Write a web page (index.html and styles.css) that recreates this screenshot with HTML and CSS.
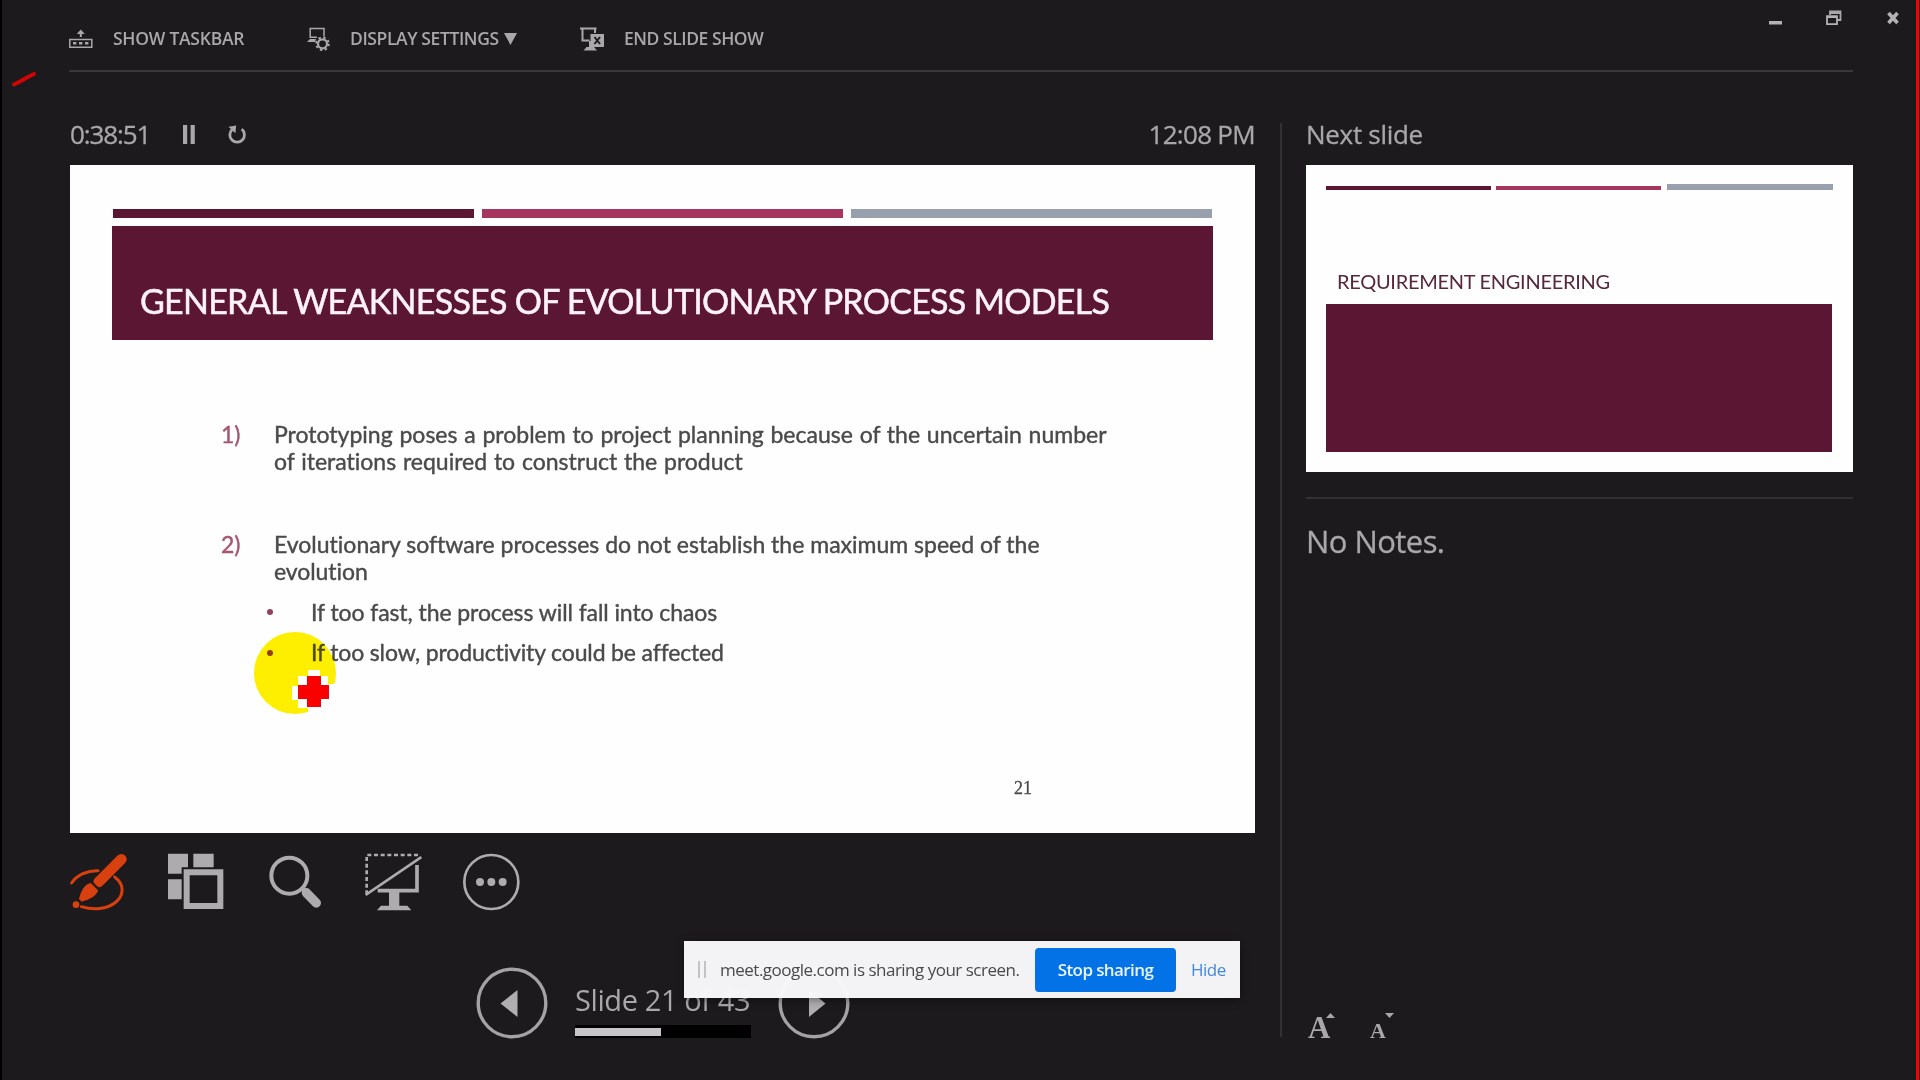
FILE: index.html
```html
<!DOCTYPE html>
<html lang="en">
<head>
<meta charset="utf-8">
<title>Presenter View</title>
<link rel="stylesheet" href="styles.css">
</head>
<body>
<div class="presenter">
  <header class="topbar">
    <nav class="commands">
      <a class="command">
        <svg class="ico-taskbar" width="24" height="24" viewBox="0 0 24 24"><path d="M.8 12.4h22v7.8H.8z" fill="none" stroke="currentColor" stroke-width="1.5"/><path d="M4 15h3.400v2.600H4zM10 15h3.400v2.600H10zM16 15h3.400v2.600H16zM10.800 10V7H7.800L11.800 2.500 15.800 7H12.800V10z" fill="currentColor"/></svg>
        <span class="lbl lbl-taskbar">SHOW TASKBAR</span>
      </a>
      <a class="command">
        <svg class="ico-display" width="24" height="24" viewBox="0 0 24 24"><path d="M3.200 11V1.400H17V9.500M3 10.200H10" fill="none" stroke="currentColor" stroke-width="1.500"/><path d="M3 12h6l-1 3H0z" fill="currentColor"/><circle cx="15.500" cy="16.800" r="4.500" fill="none" stroke="currentColor" stroke-width="2.200"/><circle cx="15.500" cy="16.800" r="6.300" fill="none" stroke="currentColor" stroke-width="2" stroke-dasharray="2.400 2.550"/></svg>
        <span class="lbl lbl-display">DISPLAY SETTINGS</span>
        <svg class="caret" width="13" height="12" viewBox="0 0 13 12"><path d="M0 0h13L6.500 12z" fill="currentColor"/></svg>
      </a>
      <a class="command">
        <svg class="ico-end" width="25" height="24" viewBox="0 0 25 24"><path d="M0 1.500h16.500M2.500 1.500v12h7M15 2v4M10 14v7" fill="none" stroke="currentColor" stroke-width="2"/><path d="M10.500 7H24v13H10.500z" fill="currentColor"/><path d="M14.500 10l5.500 7m0-7l-5.500 7" stroke="#1c1a1c" stroke-width="2"/><path d="M3.500 23.500L6.500 20H14l3 3.500z" fill="currentColor"/></svg>
        <span class="lbl lbl-end">END SLIDE SHOW</span>
      </a>
    </nav>
    <div class="window-buttons">
      <svg width="14" height="16" viewBox="0 0 14 16"><path d="M0 11h13v3.500H0z" fill="#b4b2b4"/></svg>
      <svg width="16" height="16" viewBox="0 0 16 16"><path d="M4 5V1.500h10.500v8.500H11M4 3h10.500" fill="none" stroke="#a9a7a9" stroke-width="1.800"/><path d="M1 6.200h10V14.200H1zM1 7h10" fill="none" stroke="#b4b2b4" stroke-width="1.800"/></svg>
      <svg width="12" height="16" viewBox="0 0 12 16"><path d="M1.500 3l9 10m0-10l-9 10" stroke="#b4b2b4" stroke-width="3.600"/></svg>
    </div>
  </header>

  <main class="stage">
    <section class="current">
      <div class="timer-row">
        <span class="timer">0:38:51</span>
        <svg class="pause" width="12" height="19" viewBox="0 0 12 19"><path d="M0 0h4.200v19H0zM7.600 0h4.200v19H7.600z" fill="currentColor"/></svg>
        <svg class="reset" width="20" height="20" viewBox="0 0 20 20"><path d="M14.700 4.200A7.300 7.300 0 1 1 5.200 4.500" fill="none" stroke="currentColor" stroke-width="2.800"/><path d="M1.500 1.800L9.200 .5 8.400 8.200z" fill="currentColor"/></svg>
        <span class="clock">12:08 PM</span>
      </div>

      <article class="slide">
        <div class="stripes"><i class="plum"></i><i class="rose"></i><i class="steel"></i></div>
        <h1 class="slide-title"><span>GENERAL WEAKNESSES OF EVOLUTIONARY PROCESS MODELS</span></h1>
        <div class="points">
          <div class="point"><b class="num">1)</b><p><span class="line l1">Prototyping poses a problem to project planning because of the uncertain number</span><span class="line l2">of iterations required to construct the product</span></p></div>
          <div class="point second"><b class="num">2)</b><p><span class="line l3">Evolutionary software processes do not establish the maximum speed of the</span><span class="line l4">evolution</span></p></div>
          <div class="sub"><i class="dot"></i><span class="l5">If too fast, the process will fall into chaos</span></div>
          <div class="sub"><i class="dot"></i><span class="l6">If too slow, productivity could be affected</span></div>
        </div>
        <div class="page-no">21</div>
      </article>

      <div class="tools">
        <svg viewBox="58 98 172 174"><path d="M63 188C78 164 112 150 142 151M192 170C222 192 220 224 196 245C168 268 128 270 92 259" fill="none" stroke="#d9400f" stroke-width="9" stroke-linecap="round"/><path d="M212 117L144 185" stroke="#d9400f" stroke-width="32" stroke-linecap="round"/><path d="M120 188l22 22c-4 18-28 29-49 34l-8-8c5-21 15-45 35-48z" fill="#d9400f"/><path d="M120 181L151 212" stroke="#1c1a1c" stroke-width="4"/><circle cx="76" cy="253" r="10" fill="#d9400f"/></svg>
        <svg viewBox="353 98 172 174"><path d="M353 100h60v60h-60zM429 100h61v60h-61zM353 177h60v60h-60z" fill="#adabad"/><path d="M394 141h130v130H394z" fill="#1c1a1c"/><path d="M409 156h101v101H409z" fill="none" stroke="#adabad" stroke-width="18"/></svg>
        <svg viewBox="648 98 172 174"><circle cx="715" cy="166" r="54" fill="none" stroke="#adabad" stroke-width="12"/><path d="M752 202l15 15" stroke="#adabad" stroke-width="14"/><path d="M766 217l30 31" stroke="#adabad" stroke-width="28" stroke-linecap="round"/></svg>
        <svg viewBox="943 98 172 174"><path d="M948 222V104h158" fill="none" stroke="#adabad" stroke-width="8" stroke-dasharray="12 8"/><path d="M945 224L1112 110" stroke="#adabad" stroke-width="8"/><path d="M1099 134v77H981" fill="none" stroke="#adabad" stroke-width="11"/><path d="M1015 214h31v42h24l12 14H979l12-14h24z" fill="#adabad"/></svg>
        <svg viewBox="1238 98 172 174"><circle cx="1323" cy="185" r="81" fill="none" stroke="#adabad" stroke-width="8"/><circle cx="1289" cy="185" r="12" fill="#adabad"/><circle cx="1323" cy="185" r="12" fill="#adabad"/><circle cx="1357" cy="185" r="12" fill="#adabad"/></svg>
      </div>

      <div class="pager">
        <svg width="72" height="72" viewBox="0 0 72 72"><circle cx="36" cy="36" r="33.800" fill="none" stroke="#a4a2a4" stroke-width="3.400"/><path d="M24.500 36.500L41.500 23v27z" fill="#b0aeb0"/></svg>
        <div class="progress"><span class="count">Slide 21 of 43</span><div class="track"><div class="fill"></div></div></div>
        <svg width="72" height="72" viewBox="0 0 72 72"><circle cx="36" cy="36" r="33.800" fill="none" stroke="#a4a2a4" stroke-width="3.400"/><path d="M47.500 36.500L31 23v27z" fill="#b0aeb0"/></svg>
      </div>
    </section>

    <aside class="side">
      <h2 class="next-label"><span>Next slide</span></h2>
      <article class="next-slide">
        <div class="next-stripes"><i class="plum"></i><i class="rose"></i><i class="steel"></i></div>
        <div class="next-title"><span>REQUIREMENT ENGINEERING</span></div>
        <div class="next-block"></div>
      </article>
      <div class="notes"><span>No Notes.</span></div>
      <div class="font-size">
        <span class="big">A</span><svg class="up" width="9" height="5" viewBox="0 0 9 5"><path d="M0 5L4.500 0 9 5z" fill="currentColor"/></svg>
        <span class="small">A</span><svg class="down" width="9" height="5" viewBox="0 0 9 5"><path d="M0 0h9L4.500 5z" fill="currentColor"/></svg>
      </div>
    </aside>
  </main>

  <div class="share-bar">
    <i class="grip"></i>
    <span class="share-text">meet.google.com is sharing your screen.</span>
    <button class="stop"><span>Stop sharing</span></button>
    <a class="hide">Hide</a>
  </div>

  <div class="halo"></div>
  <svg class="cursor" width="44" height="44" viewBox="0 0 44 44"><path d="M16 0h12v6h8v8h8v16h-8v8h-8v6H16v-6H6v-8H0V16h6V6h10z" fill="#fff"/><path d="M15 6h14v9h8v14h-8v8H15v-8H6V15h9z" fill="#fb0000"/></svg>
  <svg class="ink" width="28" height="18" viewBox="0 0 28 18"><path d="M3 13.500C10 10.500 15 6.500 23 3" fill="none" stroke="#d10505" stroke-width="4" stroke-linecap="round"/></svg>
  <div class="edge-left"></div>
  <div class="edge-right"></div>
</div>
</body>
</html>
```
FILE: styles.css
```css
* { box-sizing: border-box; }
body { margin: 0; background: #1c1a1c; }
h1, h2, p { margin: 0; font-weight: 400; }
i, b { font-style: normal; font-weight: 400; }
svg { display: block; flex: none; }

.presenter {
  position: relative;
  width: 1920px;
  height: 1080px;
  overflow: hidden;
  display: flex;
  flex-direction: column;
  background: #1c1a1c;
  color: #a9a7a9;
  font-family: "Open Sans", "Noto Sans", sans-serif;
  white-space: nowrap;
}

/* top command bar */
.topbar {
  height: 72px;
  margin: 0 67px 0 69px;
  border-bottom: 2px solid #393739;
  display: flex;
  justify-content: space-between;
}
.commands { display: flex; padding-top: 27px; }
.command { display: flex; height: 24px; align-items: center; }
.lbl { font-size: 17.5px; font-weight: 600; line-height: 24px; padding-bottom: 2px; }
.lbl-taskbar { width: 194px; margin-left: 20px; letter-spacing: -0.25px; }
.lbl-display { width: 149px; margin-left: 19px; letter-spacing: -0.4px; }
.caret { margin: 0 63px 0 5px; }
.lbl-end { margin-left: 19px; letter-spacing: -0.45px; }
.window-buttons { display: flex; padding-top: 10px; margin-right: -46px; }
.window-buttons svg:nth-child(1) { margin-right: 43px; }
.window-buttons svg:nth-child(2) { margin-right: 45px; }

/* main area */
.stage { display: flex; padding: 51px 67px 0 70px; height: 1008px; }
.current { width: 1186px; }
.timer-row { height: 42px; display: flex; align-items: flex-start; padding-top: 2px; }
.timer, .clock { font-size: 26px; line-height: 22px; margin-top: -2px; -webkit-text-stroke: 0.3px currentColor; }
.timer { width: 113px; letter-spacing: -1.1px; }
.reset { margin-left: 32px; }
.clock { margin-left: auto; letter-spacing: -0.7px; padding-right: 0; }

.slide { width: 1185px; height: 668px; background: #fefefe; padding: 44px 42px 0; color: #4b4a4b; font-family: Lato, sans-serif; }
.stripes { display: grid; grid-template-columns: 361px 361px 361px; column-gap: 8px; height: 9px; margin-left: 1px; }
.plum { background: #5b1634; }
.rose { background: #a5375f; }
.steel { background: #98a0ad; }
.slide-title { height: 114px; margin-top: 8px; padding: 55px 0 0 28px; background: #5b1634; color: #fff2fa; font-size: 34px; line-height: 40px; letter-spacing: -0.74px; -webkit-text-stroke: 0.5px currentColor; }
.points { padding: 81px 0 0 109px; font-size: 23px; line-height: 27px; font-variant-ligatures: none; -webkit-text-stroke: 0.4px currentColor; }
.point { display: flex; }
.second { margin-top: 56px; }
.num { width: 53px; color: #a45570; }
.line { display: block; }
.l1 { word-spacing: 0.9px; }
.l2 { word-spacing: 0.9px; }
.l4, .l5 { letter-spacing: -0.08px; }
.l6 { letter-spacing: -0.14px; }
.sub { display: flex; align-items: center; margin-top: 13.500px; padding-left: 46px; }
.dot { width: 6px; height: 6px; border-radius: 3px; background: #963f5c; margin-right: 38px; }
.page-no { margin: 112px 0 0 902px; font: 18px/20px "Liberation Serif", serif; -webkit-text-stroke: 0.3px currentColor; }

.tools { display: flex; gap: 41px; height: 58px; margin-top: 20px; }
.tools svg { width: 57.330px; height: 58px; }

.pager { display: flex; margin: 56px 0 0 406px; height: 72px; }
.progress { width: 176px; margin: 0 27px; padding-top: 17px; }
.count { display: block; height: 32px; font-size: 29px; line-height: 32px; letter-spacing: -0.4px; }
.track { height: 13px; margin-top: 9px; padding: 3px 0 2px; background: #000; }
.fill { width: 86px; height: 8px; background: #c8c5c8; }

/* right column */
.side { width: 573px; height: 914px; margin-left: 25px; padding-left: 24px; border-left: 2px solid #333133; display: flex; flex-direction: column; }
.next-label { height: 42px; font-size: 26px; line-height: 22px; letter-spacing: -0.3px; -webkit-text-stroke: 0.3px currentColor; }
.next-slide { width: 547px; height: 307px; background: #fefefe; padding: 19px 20px 0; }
.next-stripes { display: grid; grid-template-columns: 165px 165px 166px; column-gap: 5px; height: 6px; align-items: end; }
.next-stripes i { height: 4px; }
.next-stripes .steel { height: 6px; margin: 0 -1px 0 1px; }
.next-title { height: 114px; padding: 78px 0 0 11px; color: #57283d; font: 20px/26px Lato, sans-serif; letter-spacing: -0.28px; }
.next-block { height: 148px; width: 506px; background: #5b1634; }
.notes { margin-top: 25px; border-top: 2px solid #333133; padding-top: 22px; height: 500px; font-size: 31px; line-height: 40px; letter-spacing: -0.55px; -webkit-text-stroke: 0.3px currentColor; }
.font-size { display: flex; margin: auto 0 -1px 2px; height: 24px; align-items: flex-start; font-family: "Liberation Serif", serif; font-weight: 700; }
.big { font-size: 31px; line-height: 28px; width: 18px; }
.small { font-size: 22px; line-height: 33px; width: 15px; margin-left: 35px; }
.up, .down { margin-top: -1px; }

/* overlays */
.share-bar {
  position: absolute; left: 684px; top: 941px; width: 556px; height: 57px;
  display: flex; align-items: center;
  background: rgba(247, 246, 249, .985);
  box-shadow: 0 2px 8px rgba(0, 0, 0, .4);
  color: #4a494c; font-size: 17px;
}
.grip { width: 8px; height: 17px; margin-left: 14px; border: solid #c3c1c5; border-width: 0 2px; }
.share-text { width: 314px; margin-left: 14px; letter-spacing: -0.5px; }
.stop { width: 141px; height: 44px; padding: 0; margin-left: 1px; border: 0; border-radius: 4px; background: #0372e7; color: #eaf4ff; font: 600 17px/44px "Open Sans", sans-serif; letter-spacing: -0.6px; }
.hide { margin-left: 15px; color: #4289dc; letter-spacing: -0.5px; }
.halo { position: absolute; left: 254px; top: 632px; width: 82px; height: 82px; border-radius: 50%; background: #fff000; mix-blend-mode: multiply; }
.cursor { position: absolute; left: 292px; top: 670px; }
.ink { position: absolute; left: 11px; top: 71px; }
.edge-left { position: absolute; left: 0; top: 0; width: 2px; height: 1080px; background: #000; }
.edge-right { position: absolute; right: 1px; top: 0; width: 3px; height: 1080px; background: #f80000; }
```
